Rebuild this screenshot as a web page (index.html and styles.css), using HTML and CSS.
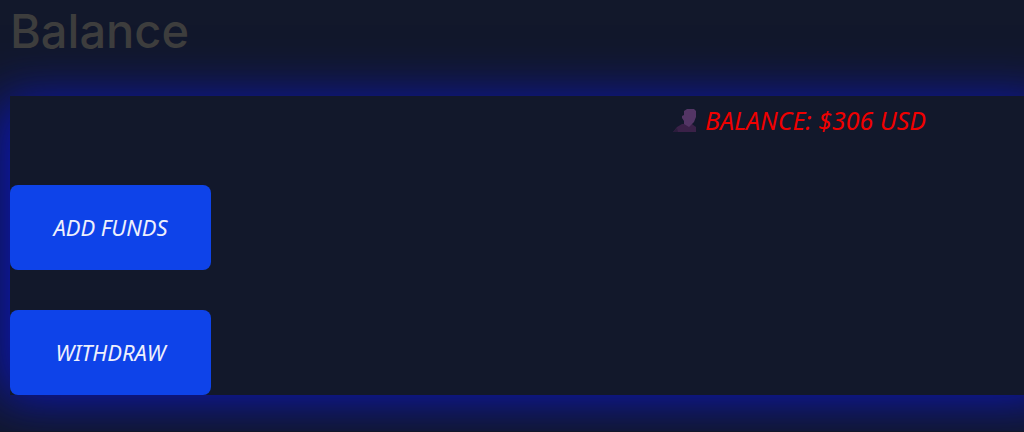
FILE: index.html
```
<!DOCTYPE html>
<html lang="en">
<head>
    <meta charset="UTF-8">
    <meta name="viewport" content="width=device-width, initial-scale=1.0">
    <title>Balance</title>
    <link rel="stylesheet" href="styles.css">
</head>
<body>
    <h1 class="title">Balance</h1>
    <main class="wallet">
        <p class="balance">
            <svg class="user-icon" viewBox="0 0 24 24" aria-hidden="true">
                <path fill="#3a2148" d="M0 23L4 18L9 15H19L23 18V23Z"/>
                <path fill="#2b1c3c" d="M0 23L4 19L5 23Z"/>
                <path fill="#533565" d="M11 2L14 0H21L23 2V8L21 13L19 15L16 18L11 15V12L9 9V7L11 6Z"/>
            </svg>
            <span>BALANCE: $306 USD</span>
        </p>
        <button class="btn" type="button">ADD FUNDS</button>
        <button class="btn" type="button">WITHDRAW</button>
    </main>
</body>
</html>
```
FILE: styles.css
```
body{
    margin: 0;
    padding-bottom: 36px;
    background-color: #12182b;
    font-family: "Noto Sans", sans-serif;
    overflow-x: hidden;
}
.title{
    margin: 0 0 34px 10px;
    color: #3d3d3d;
    font-family: Inter, sans-serif;
    font-size: 47px;
    font-weight: 500;
    line-height: 62px;
}
/*runs past the right edge so the glow has no corner there*/
.wallet{
    display: flex;
    flex-direction: column;
    align-items: flex-start;
    gap: 40px;
    margin: 0 -40px 0 10px;
    background-color: #12182b;
    box-shadow: -10px 4px 50px #0b15bc;
}
/*balance line*/
.balance{
    display: flex;
    align-items: center;
    align-self: flex-end;
    gap: 8px;
    margin: 8px 138px 8px 0;
    color: #f00000;
    font-size: 25px;
    font-style: italic;
    line-height: 33px;
}
.user-icon{
    width: 24px;
    height: 24px;
}
/*buttons*/
.btn{
    min-width: 201px;
    padding: 26px 42px;
    border: none;
    border-radius: 8px;
    background-color: #0e43e9;
    color: #eef0fc;
    font-family: inherit;
    font-size: 22px;
    font-style: italic;
    line-height: 33px;
    cursor: pointer;
}
.btn:hover{
    background-color: #2a5bf5;
}
```
